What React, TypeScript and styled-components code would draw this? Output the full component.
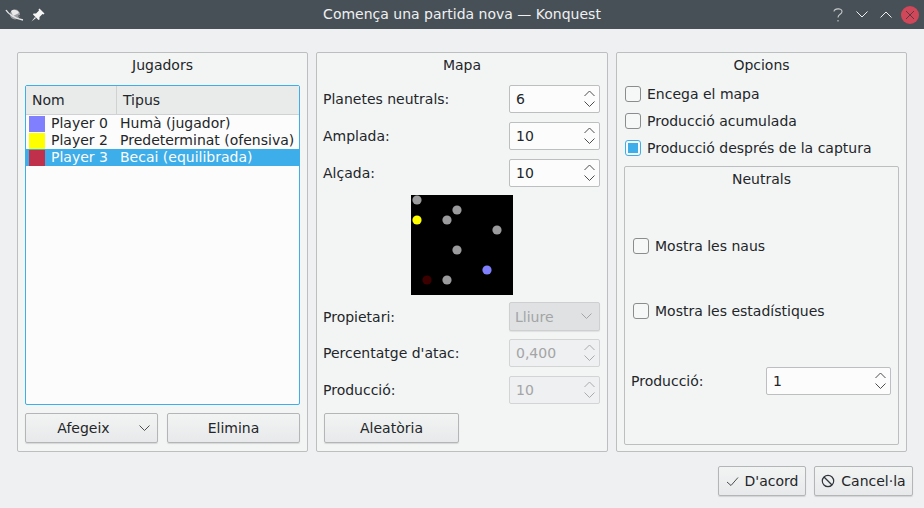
import styled, { createGlobalStyle } from "styled-components";

const GlobalStyle = createGlobalStyle`
  html, body {
    margin: 0;
    padding: 0;
    background: #eff0f1;
  }
  body {
    width: 924px;
    height: 508px;
    overflow: hidden;
    font-family: "DejaVu Sans", sans-serif;
    font-size: 14px;
    color: #232629;
  }
  * { box-sizing: border-box; }
`;

const Window = styled.div`
  width: 924px;
  height: 508px;
  display: flex;
  flex-direction: column;
`;

const TitleBar = styled.div`
  height: 29px;
  background: #475057;
  color: #eff0f1;
  display: flex;
  align-items: center;
  justify-content: space-between;
  padding: 0 5px;
  position: relative;
`;

const TitleText = styled.div`
  position: absolute;
  left: 0;
  right: 0;
  text-align: center;
  line-height: 29px;
  pointer-events: none;
`;

const TitleIcons = styled.div<{ $gap: number }>`
  display: flex;
  align-items: center;
  gap: ${(p) => p.$gap}px;
`;

const CloseWrap = styled.span`
  display: flex;
  margin-left: -3px;
`;

const Body = styled.div`
  flex: 1;
  padding: 23px 11px 0 17px;
  display: flex;
  flex-direction: column;
`;

const Columns = styled.div`
  display: grid;
  grid-template-columns: 291px 292px 291px;
  gap: 8px;
  height: 400px;
`;

const Group = styled.section`
  border: 1px solid #bcbebf;
  border-radius: 2px;
  background: #f3f5f5;
  display: flex;
  flex-direction: column;
  padding: 0 7px;
`;

const GroupTitle = styled.div`
  height: 24px;
  line-height: 25px;
  text-align: center;
  flex: none;
`;

const PlayersContent = styled.div`
  flex: 1;
  display: flex;
  flex-direction: column;
  padding: 8px 0 8px;
  gap: 8px;
`;

const Table = styled.div`
  height: 320px;
  border: 1px solid #3daee9;
  border-radius: 2px;
  background: #fcfcfc;
`;

const HeaderRow = styled.div`
  display: grid;
  grid-template-columns: 90px 1fr;
  height: 29px;
  background: #e9ebeb;
  border-bottom: 1px solid #cfd1d2;
`;

const HeaderCell = styled.div`
  padding-left: 6px;
  line-height: 28px;
  & + & {
    border-left: 1px solid #cfd1d2;
  }
`;

const Row = styled.div<{ $selected?: boolean }>`
  display: flex;
  align-items: center;
  height: 17px;
  background: ${(p) => (p.$selected ? "#3daee9" : "transparent")};
  color: ${(p) => (p.$selected ? "#fcfcfc" : "#232629")};
`;

const Swatch = styled.span<{ $color: string }>`
  width: 16px;
  height: 16px;
  margin: 0 6px 0 3px;
  flex: none;
  background: ${(p) => p.$color};
`;

const PlayerName = styled.span`
  width: 69px;
  flex: none;
  margin-bottom: 2px;
`;

const PlayerKind = styled.span`
  white-space: nowrap;
  margin-bottom: 2px;
`;

const ButtonRow = styled.div`
  display: grid;
  grid-template-columns: 133px 133px;
  justify-content: space-between;
`;

const Button = styled.button<{ $width?: number; $menu?: boolean }>`
  height: 30px;
  width: ${(p) => (p.$width ? `${p.$width}px` : "auto")};
  border: 1px solid #b3b5b6;
  border-radius: 2px;
  background: linear-gradient(#f2f3f3, #e8e9ea);
  box-shadow: 0 1px 1px rgba(0, 0, 0, 0.12);
  font: inherit;
  color: inherit;
  display: flex;
  align-items: center;
  justify-content: center;
  gap: 6px;
  padding: ${(p) => (p.$menu ? "0 16px 0 0" : "0")};
  position: relative;
`;

const MenuArrow = styled.span`
  position: absolute;
  right: 7px;
  top: 11px;
  display: flex;
`;

const MapContent = styled.div`
  flex: 1;
  display: flex;
  flex-direction: column;
  padding: 8px 0 0;
`;

const FormRow = styled.div<{ $gap?: number }>`
  display: flex;
  align-items: center;
  justify-content: space-between;
  margin-bottom: ${(p) => p.$gap ?? 9}px;
`;

const Label = styled.span`
  margin-left: -1px;
`;

const Spin = styled.div<{ $disabled?: boolean; $width?: number }>`
  width: ${(p) => p.$width ?? 91}px;
  height: 28px;
  border: 1px solid ${(p) => (p.$disabled ? "#d3d5d5" : "#bcbebf")};
  border-radius: 2px;
  background: ${(p) => (p.$disabled ? "#eff0f1" : "#fcfcfc")};
  color: ${(p) => (p.$disabled ? "#a3a5a6" : "#232629")};
  display: flex;
  align-items: center;
  justify-content: space-between;
  padding: 0 4px 0 6px;
`;

const SpinArrows = styled.span`
  display: flex;
  flex-direction: column;
  gap: 4px;
`;

const Combo = styled.div`
  width: 91px;
  height: 29px;
  border: 1px solid #cdcfd0;
  border-radius: 2px;
  background: #dfe1e2;
  box-shadow: 0 1px 1px rgba(0, 0, 0, 0.08);
  color: #a3a5a6;
  display: flex;
  align-items: center;
  justify-content: space-between;
  padding: 0 7px 0 5px;
`;

const MapPreview = styled.svg`
  display: block;
  align-self: flex-start;
  margin: -1px 0 7px 87px;
`;

const OptionsContent = styled.div`
  flex: 1;
  display: flex;
  flex-direction: column;
  padding: 3px 0 6px 1px;
`;

const CheckRow = styled.label`
  display: flex;
  align-items: center;
  gap: 6px;
  height: 27px;
`;

const Box = styled.span<{ $checked?: boolean }>`
  width: 16px;
  height: 16px;
  flex: none;
  border: 1px solid ${(p) => (p.$checked ? "#3daee9" : "#8a8c8e")};
  border-radius: 3px;
  background: #f6f7f7;
  display: flex;
  align-items: center;
  justify-content: center;
  &::after {
    content: "";
    width: 10px;
    height: 10px;
    background: ${(p) => (p.$checked ? "#3daee9" : "transparent")};
  }
`;

const NeutralGroup = styled.div`
  flex: 1;
  margin: 5px 0 0 -1px;
  border: 1px solid #bcbebf;
  border-radius: 2px;
  display: flex;
  flex-direction: column;
  padding: 0 7px;
`;

const NeutralBody = styled.div`
  flex: 1;
  display: flex;
  flex-direction: column;
  padding-top: 41px;
`;

const NeutralCheck = styled(CheckRow)`
  margin: 0 0 38px 1px;
`;

const NeutralProduction = styled(FormRow)`
  margin-top: 5px;
`;

const Footer = styled.div`
  display: flex;
  justify-content: flex-end;
  gap: 8px;
  padding: 14px 0 0 0;
`;

const Chevron = ({
  up,
  size = 11,
  color = "#4d4d4d",
}: {
  up?: boolean;
  size?: number;
  color?: string;
}) => (
  <svg width={size} height={Math.ceil(size / 2) + 1} viewBox={`0 0 ${size} ${Math.ceil(size / 2) + 1}`}>
    <path
      d={
        up
          ? `M0.5 ${size / 2 + 0.5} L${size / 2} 1 L${size - 0.5} ${size / 2 + 0.5}`
          : `M0.5 0.5 L${size / 2} ${size / 2} L${size - 0.5} 0.5`
      }
      fill="none"
      stroke={color}
      strokeWidth="1"
    />
  </svg>
);

const Arrows = ({ disabled }: { disabled?: boolean }) => (
  <SpinArrows>
    <Chevron up size={11} color={disabled ? "#a9abac" : "#4d4d4d"} />
    <Chevron size={11} color={disabled ? "#a9abac" : "#4d4d4d"} />
  </SpinArrows>
);

const SpinBox = ({ value, disabled, width }: { value: string; disabled?: boolean; width?: number }) => (
  <Spin $disabled={disabled} $width={width}>
    <span>{value}</span>
    <Arrows disabled={disabled} />
  </Spin>
);

const PlanetIcon = () => (
  <svg width="20" height="16" viewBox="0 0 20 16">
    <circle cx="10" cy="7.5" r="5" fill="#9a9ea2" />
    <path d="M6 4 a5 5 0 0 1 8 2 L8 9 Z" fill="#e8e8e8" />
    <path d="M9 11 a5 5 0 0 0 5 -3 L15 9 Z" fill="#23272a" />
    <path d="M1 3 C3 7 11 12 18 13" fill="none" stroke="#e3e4e5" strokeWidth="1.4" />
  </svg>
);

const PinIcon = () => (
  <svg width="14" height="14" viewBox="0 0 14 14">
    <path d="M8.5 0.5 L13.5 5.5 L12.5 6.5 L11.5 6 L8.5 9 L8.5 11.5 L7.5 12 L2 6.5 L2.5 5.5 L5 5.5 L8 2.5 L7.5 1.5 Z" fill="#f5f5f5" />
    <path d="M4 9 L0.5 13.5 L5 10 Z" fill="#f5f5f5" />
  </svg>
);

const CloseIcon = () => (
  <svg width="18" height="18" viewBox="0 0 18 18">
    <circle cx="9" cy="9" r="9" fill="#cf4759" />
    <path d="M5 5 L13 13 M13 5 L5 13" stroke="#5a3a42" strokeWidth="1" />
  </svg>
);

const CheckIcon = () => (
  <svg width="13" height="11" viewBox="0 0 13 11">
    <path d="M1 6 L5 9.5 L12 1.5" fill="none" stroke="#4d4d4d" strokeWidth="1" />
  </svg>
);

const CancelIcon = () => (
  <svg width="14" height="14" viewBox="0 0 14 14">
    <circle cx="7" cy="7" r="5.7" fill="none" stroke="#31363b" strokeWidth="1.2" />
    <path d="M3 3 L11 11" stroke="#31363b" strokeWidth="1.2" />
  </svg>
);

const players = [
  { name: "Player 0", kind: "Humà (jugador)", color: "#8080ff" },
  { name: "Player 2", kind: "Predeterminat (ofensiva)", color: "#ffff00" },
  { name: "Player 3", kind: "Becai (equilibrada)", color: "#c1304a", selected: true },
];

const planets = [
  { x: 6, y: 5, fill: "#9b9b9e" },
  { x: 46, y: 15, fill: "#9b9b9e" },
  { x: 36, y: 25, fill: "#9b9b9e" },
  { x: 86, y: 35, fill: "#9b9b9e" },
  { x: 46, y: 55, fill: "#9b9b9e" },
  { x: 36, y: 85, fill: "#9b9b9e" },
  { x: 6, y: 25, fill: "#ffff00" },
  { x: 76, y: 75, fill: "#8080ff" },
  { x: 16, y: 85, fill: "#3d0000" },
];

function App() {
  return (
    <Window>
      <GlobalStyle />
      <TitleBar>
        <TitleText>Comença una partida nova — Konquest</TitleText>
        <TitleIcons $gap={6}>
          <PlanetIcon />
          <PinIcon />
        </TitleIcons>
        <TitleIcons $gap={12}>
          <svg width="12" height="16" viewBox="0 0 12 16">
            <path
              d="M2 4.5 C2 1.5 10 0.5 10 4.5 C10 7.5 6 7 6 10.5 M6 13 L6 14.5"
              fill="none"
              stroke="#c8cacb"
              strokeWidth="1.1"
            />
          </svg>
          <Chevron size={12} color="#eff0f1" />
          <Chevron up size={12} color="#eff0f1" />
          <CloseWrap>
            <CloseIcon />
          </CloseWrap>
        </TitleIcons>
      </TitleBar>
      <Body>
        <Columns>
          <Group>
            <GroupTitle>Jugadors</GroupTitle>
            <PlayersContent>
              <Table>
                <HeaderRow>
                  <HeaderCell>Nom</HeaderCell>
                  <HeaderCell>Tipus</HeaderCell>
                </HeaderRow>
                {players.map((p) => (
                  <Row key={p.name} $selected={p.selected}>
                    <Swatch $color={p.color} />
                    <PlayerName>{p.name}</PlayerName>
                    <PlayerKind>{p.kind}</PlayerKind>
                  </Row>
                ))}
              </Table>
              <ButtonRow>
                <Button $menu>
                  Afegeix
                  <MenuArrow>
                    <Chevron size={11} />
                  </MenuArrow>
                </Button>
                <Button>Elimina</Button>
              </ButtonRow>
            </PlayersContent>
          </Group>
          <Group>
            <GroupTitle>Mapa</GroupTitle>
            <MapContent>
              <FormRow>
                <Label>Planetes neutrals:</Label>
                <SpinBox value="6" />
              </FormRow>
              <FormRow>
                <Label>Amplada:</Label>
                <SpinBox value="10" />
              </FormRow>
              <FormRow>
                <Label>Alçada:</Label>
                <SpinBox value="10" />
              </FormRow>
              <MapPreview width="102" height="100" viewBox="0 0 102 100">
                <rect width="102" height="100" fill="#000" />
                {planets.map((p, i) => (
                  <circle key={i} cx={p.x} cy={p.y} r="4.6" fill={p.fill} />
                ))}
              </MapPreview>
              <FormRow $gap={8}>
                <Label>Propietari:</Label>
                <Combo>
                  Lliure
                  <Chevron size={11} color="#a3a5a6" />
                </Combo>
              </FormRow>
              <FormRow>
                <Label>Percentatge d'atac:</Label>
                <SpinBox value="0,400" disabled />
              </FormRow>
              <FormRow>
                <Label>Producció:</Label>
                <SpinBox value="10" disabled />
              </FormRow>
              <Button $width={135}>Aleatòria</Button>
            </MapContent>
          </Group>
          <Group>
            <GroupTitle>Opcions</GroupTitle>
            <OptionsContent>
              <CheckRow>
                <Box />
                Encega el mapa
              </CheckRow>
              <CheckRow>
                <Box />
                Producció acumulada
              </CheckRow>
              <CheckRow>
                <Box $checked />
                Producció després de la captura
              </CheckRow>
              <NeutralGroup>
                <GroupTitle>Neutrals</GroupTitle>
                <NeutralBody>
                  <NeutralCheck>
                    <Box />
                    Mostra les naus
                  </NeutralCheck>
                  <NeutralCheck>
                    <Box />
                    Mostra les estadístiques
                  </NeutralCheck>
                  <NeutralProduction>
                    <Label>Producció:</Label>
                    <SpinBox value="1" width={125} />
                  </NeutralProduction>
                </NeutralBody>
              </NeutralGroup>
            </OptionsContent>
          </Group>
        </Columns>
        <Footer>
          <Button $width={88}>
            <CheckIcon />
            D'acord
          </Button>
          <Button $width={99}>
            <CancelIcon />
            Cancel·la
          </Button>
        </Footer>
      </Body>
    </Window>
  );
}

export default App;
